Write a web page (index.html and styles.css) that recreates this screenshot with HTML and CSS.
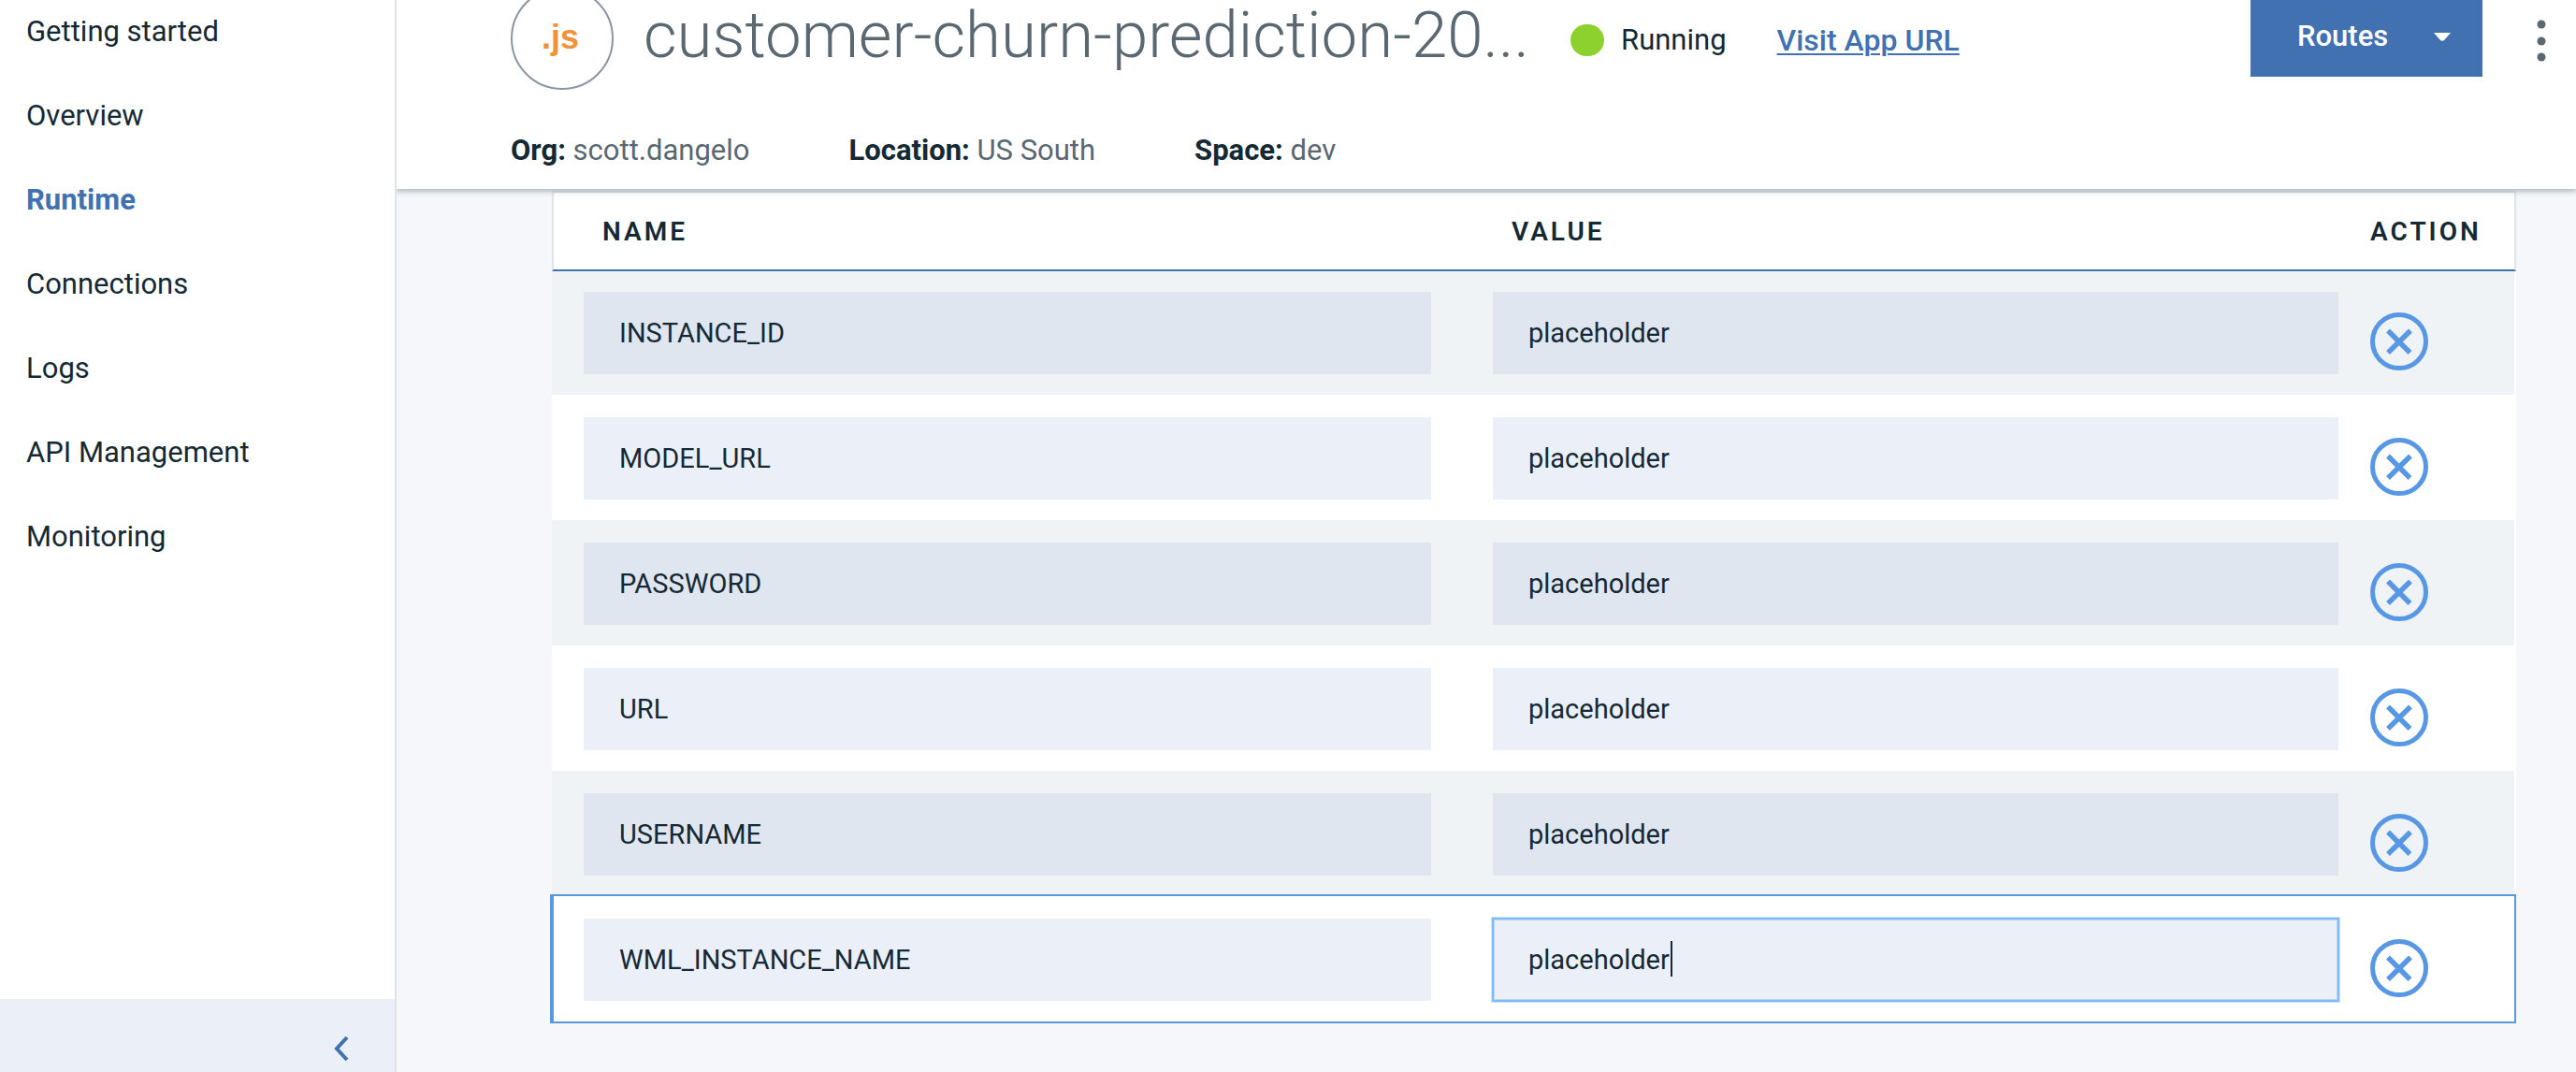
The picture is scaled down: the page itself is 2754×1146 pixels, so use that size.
FILE: index.html
```
<!DOCTYPE html>
<html lang="en">
<head>
<meta charset="utf-8">
<title>customer-churn-prediction – Runtime</title>
<link rel="stylesheet" href="styles.css">
</head>
<body>
<svg class="sprite" aria-hidden="true">
  <symbol id="remove" viewBox="0 0 62 62">
    <circle cx="31" cy="31" r="28.5" fill="none" stroke="currentColor" stroke-width="5"/>
    <path d="M19 19.500 42.500 43M43 19.500 19 43" fill="none" stroke="currentColor" stroke-width="5.500"/>
  </symbol>
</svg>
<div class="app">
  <aside class="sidebar">
    <nav class="nav">
      <a href="#start">Getting started</a>
      <a href="#overview">Overview</a>
      <a href="#runtime" class="active">Runtime</a>
      <a href="#connections">Connections</a>
      <a href="#logs">Logs</a>
      <a href="#api">API Management</a>
      <a href="#monitoring">Monitoring</a>
    </nav>
    <button class="collapse" aria-label="Collapse menu">
      <svg width="18" height="28" viewBox="0 0 18 28"><path d="M15 2 4 14l11 12" fill="none" stroke="currentColor" stroke-width="4"/></svg>
    </button>
  </aside>
  <main class="main">
    <header class="header">
      <div class="title-row">
        <svg class="logo" width="110" height="96" viewBox="0 14 110 96">
          <circle cx="55" cy="55" r="54" fill="#fff" stroke="#8897a2" stroke-width="2"/>
          <text x="53" y="66" text-anchor="middle">.js</text>
        </svg>
        <h1>customer-churn-prediction-20...</h1>
        <div class="status"><span class="dot"></span>Running</div>
        <a class="visit" href="#app">Visit App URL</a>
        <button class="routes">Routes
          <svg width="18" height="9" viewBox="0 0 18 9"><path d="M0 0h18l-7 8q-2 1.500-4 0z" fill="currentColor"/></svg>
        </button>
        <button class="more" aria-label="More actions">
          <svg width="10" height="46" viewBox="0 0 10 46" fill="currentColor"><circle cx="5" cy="5" r="4.500"/><circle cx="5" cy="23" r="4.500"/><circle cx="5" cy="40" r="4.500"/></svg>
        </button>
      </div>
      <div class="meta">
        <span><b>Org:</b> scott.dangelo</span>
        <span><b>Location:</b> US South</span>
        <span><b>Space:</b> dev</span>
      </div>
    </header>
    <table class="vars">
      <colgroup><col><col><col class="col-action"></colgroup>
      <thead>
        <tr><th scope="col">Name</th><th scope="col">Value</th><th scope="col">Action</th></tr>
      </thead>
      <tbody>
        <tr>
          <td><input aria-label="Name" value="INSTANCE_ID"></td>
          <td><input aria-label="Value" value="placeholder"></td>
          <td><button class="remove" aria-label="Remove"><svg><use href="#remove"/></svg></button></td>
        </tr>
        <tr>
          <td><input aria-label="Name" value="MODEL_URL"></td>
          <td><input aria-label="Value" value="placeholder"></td>
          <td><button class="remove" aria-label="Remove"><svg><use href="#remove"/></svg></button></td>
        </tr>
        <tr>
          <td><input aria-label="Name" value="PASSWORD"></td>
          <td><input aria-label="Value" value="placeholder"></td>
          <td><button class="remove" aria-label="Remove"><svg><use href="#remove"/></svg></button></td>
        </tr>
        <tr>
          <td><input aria-label="Name" value="URL"></td>
          <td><input aria-label="Value" value="placeholder"></td>
          <td><button class="remove" aria-label="Remove"><svg><use href="#remove"/></svg></button></td>
        </tr>
        <tr>
          <td><input aria-label="Name" value="USERNAME"></td>
          <td><input aria-label="Value" value="placeholder"></td>
          <td><button class="remove" aria-label="Remove"><svg><use href="#remove"/></svg></button></td>
        </tr>
        <tr class="selected">
          <td><input aria-label="Name" value="WML_INSTANCE_NAME"></td>
          <td><div class="field"><input class="editing" aria-label="Value" value="placeholder"><span class="caret"></span></div></td>
          <td><button class="remove" aria-label="Remove"><svg><use href="#remove"/></svg></button></td>
        </tr>
      </tbody>
    </table>
  </main>
</div>
</body>
</html>
```
FILE: styles.css
```
* { box-sizing: border-box; }

body {
  margin: 0;
  background: #f5f7fb;
  color: #152934;
  font: 31px/42px Roboto, "Liberation Sans", sans-serif;
}

button {
  border: 0;
  padding: 0;
  background: none;
  font: inherit;
}

.sprite { display: none; }

.app {
  display: flex;
  min-height: 100vh;
}

/* Side navigation */
.sidebar {
  flex: none;
  display: flex;
  flex-direction: column;
  justify-content: space-between;
  width: 424px;
  background: #fff;
  border-right: 2px solid #dfe3e8;
}

.nav {
  display: flex;
  flex-direction: column;
  gap: 48px;
  padding: 13px 28px;
}

.nav a {
  color: #152934;
  text-decoration: none;
}

.nav a.active {
  color: #4171b1;
  font-weight: 700;
}

.collapse {
  display: flex;
  justify-content: flex-end;
  height: 78px;
  padding: 39px 48px 0 0;
  background: #ebeff8;
  color: #4171b1;
}

/* Application header */
.main {
  flex: 1;
  min-width: 0;
}

.header {
  position: relative;
  height: 202px;
  padding-left: 122px;
  background: #fff;
  box-shadow: 0 1px 6px 1px rgba(60, 80, 90, .45);
  clip-path: inset(0 0 -12px 0);
}

.title-row {
  display: flex;
  align-items: flex-start;
  height: 96px;
}

.logo { flex: none; }

.logo text {
  fill: #f19237;
  font: 700 36px "Liberation Sans", sans-serif;
}

h1 {
  margin: 0 0 0 32px;
  color: #5a6872;
  font-size: 69px;
  font-weight: 300;
  line-height: 76px;
  white-space: nowrap;
}

.status {
  display: flex;
  align-items: center;
  gap: 18px;
  margin: 22px 0 0 44px;
}

.dot {
  width: 36px;
  height: 34px;
  border-radius: 17px;
  background: #8cd12d;
}

.visit {
  margin: 22px 0 0 54px;
  color: #4171b1;
  font-size: 32px;
  font-weight: 500;
  text-decoration-thickness: 2px;
  text-underline-offset: 3px;
}

.routes {
  display: flex;
  align-items: center;
  justify-content: space-between;
  width: 248px;
  height: 82px;
  margin-left: auto;
  padding: 0 34px 4px 50px;
  background: #4171b1;
  color: #fff;
  font-weight: 500;
}

.more {
  display: flex;
  margin: 21px 32px 0 58px;
  color: #5a6872;
}

.meta {
  display: flex;
  gap: 106px;
  padding-top: 44px;
  color: #5a6872;
}

.meta b { color: #152934; }

/* Environment variables */
.vars {
  width: calc(100% - 230px);
  margin: 2px 64px 0 166px;
  table-layout: fixed;
  border-spacing: 0;
  background: #fff;
}

.col-action { width: 156px; }

th {
  height: 86px;
  padding: 2px 0 0;
  border: solid #dfe6eb;
  border-width: 2px 0;
  border-bottom-color: #4171b1;
  font-size: 28px;
  font-weight: 600;
  letter-spacing: 3px;
  line-height: 40px;
  text-align: left;
  text-transform: uppercase;
}

th:nth-child(1) {
  padding-left: 52px;
  border-left-width: 2px;
}

th:nth-child(2) { padding-left: 54px; }

th:nth-child(3) { border-right-width: 2px; }

td {
  padding: 24px 0 22px;
  vertical-align: top;
}

td:nth-child(1) { padding-left: 34px; padding-right: 32px; }
td:nth-child(2) { padding-left: 34px; padding-right: 34px; }
td:nth-child(3) { border-right: 2px solid #fff; }

tbody tr:first-child td { padding-top: 22px; }

tbody tr:nth-child(odd) { background: #eff3f6; }

td input {
  display: block;
  width: 100%;
  height: 88px;
  margin: 0;
  padding: 0 38px;
  border: 0;
  border-radius: 0;
  background: #ebeff8;
  color: #152934;
  font: inherit;
  font-size: 29px;
}

tr:nth-child(odd) input { background: #dfe6f0; }

.remove {
  display: block;
  width: 62px;
  height: 62px;
  margin-top: 22px;
  color: #5897e4;
}

.remove svg {
  display: block;
  width: 62px;
  height: 62px;
}

tbody .selected {
  box-shadow:
    inset 2px 0 #5897e4,
    inset -2px 0 #5897e4,
    -2px -2px #5897e4,
    -2px 2px #5897e4,
    0 -2px #5897e4,
    0 2px #5897e4;
}

.selected td:nth-child(3) { border-right-color: #5897e4; }

.field { position: relative; }

.editing {
  box-shadow:
    inset 0 0 0 1px #7fbbfb,
    inset 0 0 0 2px #bcd7f5,
    0 0 0 1px #7fbbfb,
    0 0 0 2px #cfe5fd;
}

.caret {
  position: absolute;
  top: 24px;
  left: 190px;
  width: 2px;
  height: 38px;
  background: #152934;
}
```
